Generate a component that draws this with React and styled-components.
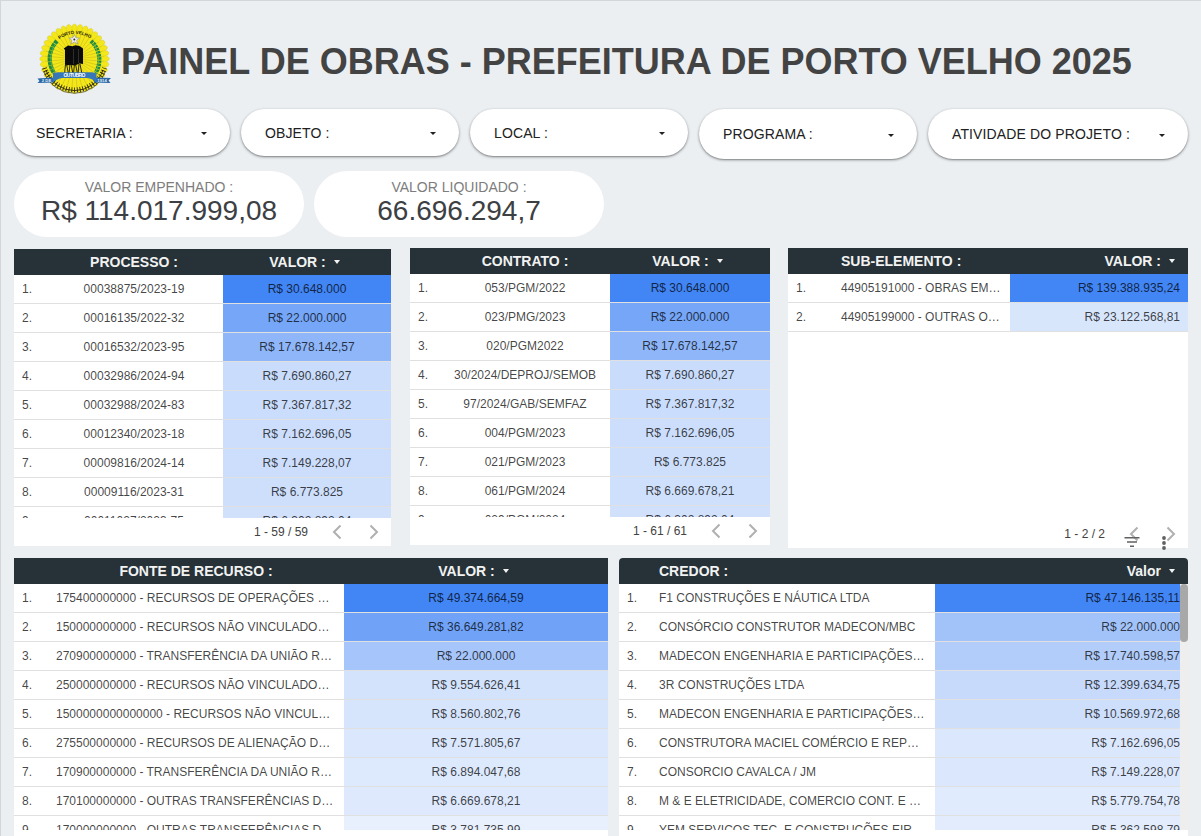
import React from "react";
import styled, { createGlobalStyle } from "styled-components";

const GlobalStyle = createGlobalStyle`
  * { box-sizing: border-box; }
  html, body { margin: 0; padding: 0; overflow: hidden; }
  body { font-family: "Liberation Sans", Arial, sans-serif; background: #ebeff2; }
`;

const Page = styled.div`
  width: 1201px;
  height: 836px;
  overflow: hidden;
  background: #ebeff2;
  border-top: 1px solid #d3d6d8;
  border-left: 1px solid #d3d6d8;
`;

const Header = styled.header`
  display: flex;
  height: 108px;
  padding: 20px 0 0 34px;
`;

const Title = styled.h1`
  margin: 20px 0 0 6px;
  font-size: 36px;
  line-height: 41px;
  font-weight: 700;
  color: #434343;
  white-space: nowrap;
`;

const Filters = styled.div`
  display: flex;
  align-items: flex-start;
  gap: 11px;
  height: 62px;
  padding-left: 11px;
`;

const Filter = styled.button`
  display: flex;
  align-items: center;
  justify-content: space-between;
  width: ${(p) => p.$width}px;
  height: ${(p) => p.$height}px;
  padding: 0 23px 0 24px;
  border: 0;
  border-radius: 25px;
  background: #fff;
  box-shadow: 0 1px 3px rgba(0, 0, 0, 0.4), 0 1px 1px rgba(0, 0, 0, 0.14);
  font: 14px/18px "Liberation Sans", Arial, sans-serif;
  letter-spacing: 0.12px;
  color: #212121;
  white-space: nowrap;
`;

const FilterArrow = styled.span`
  display: flex;
  padding-top: 2px;
`;

const Scorecards = styled.div`
  display: flex;
  gap: 10px;
  height: 77px;
  padding-left: 13px;
`;

const Scorecard = styled.div`
  width: 290px;
  height: 66px;
  padding-top: 8px;
  border-radius: 33px;
  background: #fff;
  text-align: center;
`;

const ScoreLabel = styled.div`
  font-size: 14px;
  line-height: 16px;
  color: #7d7d7d;
`;

const ScoreValue = styled.div`
  font-size: 28px;
  line-height: 32px;
  color: #3c4043;
`;

const TableRow = styled.div`
  display: flex;
  align-items: flex-start;
  padding-left: 13px;
  height: ${(p) => p.$height}px;
`;

const Panel = styled.section`
  position: relative;
  display: flex;
  flex-direction: column;
  flex: none;
  width: ${(p) => p.$width}px;
  height: ${(p) => p.$height}px;
  margin: ${(p) => p.$margin || "0"};
  border-radius: ${(p) => (p.$rounded ? "4px 4px 0 0" : "0")};
  overflow: ${(p) => (p.$rounded ? "hidden" : "visible")};
  background: #fff;
`;

const Columns = styled.div`
  display: grid;
  grid-template-columns: ${(p) => p.$cols};
`;

const HeadRow = styled(Columns)`
  flex: none;
  height: 26px;
  background: #263238;
  color: #f2f2f2;
  font-size: 14px;
  font-weight: 700;
  line-height: 26px;
`;

const HeadCell = styled.div`
  display: flex;
  align-items: center;
  justify-content: ${(p) => p.$align};
  padding: 0 8px;
  white-space: nowrap;
`;

const SortBox = styled.span`
  display: flex;
  justify-content: center;
  width: 16px;
  margin-left: 3px;
`;

const Body = styled.div`
  display: flex;
  flex: none;
  height: ${(p) => p.$height}px;
  overflow: hidden;
`;

const Rows = styled.div`
  flex: 1;
  min-width: 0;
`;

const Row = styled(Columns)`
  height: 29px;
  border-bottom: 1px solid #e0e0e0;
  font-size: 12px;
  line-height: 29px;
  color: rgba(0, 0, 0, 0.74);
`;

const Cell = styled.div`
  height: 28px;
  padding: 0 ${(p) => (p.$flush ? 0 : 8)}px 0 8px;
  text-align: ${(p) => p.$align || "left"};
  white-space: nowrap;
  overflow: hidden;
`;

const HeatCell = styled(Cell)`
  background: ${(p) => p.$fill};
`;

const ScrollTrack = styled.div`
  flex: none;
  width: 8px;
  background: #eeeeee;
`;

const ScrollThumb = styled.div`
  height: 58px;
  border-radius: 4px;
  background: #a8a8a8;
`;

const Footer = styled.footer`
  display: flex;
  align-items: center;
  justify-content: flex-end;
  height: 28px;
  margin-top: auto;
  padding-right: 12px;
  font-size: 12px;
  color: #424242;
`;

const PageRange = styled.span`
  margin-right: 24px;
`;

const Pager = styled.span`
  display: flex;
  gap: 27px;
`;

const ChartTools = styled.div`
  position: absolute;
  right: 16px;
  bottom: -3px;
  display: flex;
  gap: 16px;
`;

const mix = (ratio) => {
  const low = [246, 249, 254];
  const high = [66, 133, 244];
  return `rgb(${low.map((c, i) => Math.round(c + (high[i] - c) * ratio)).join(",")})`;
};

const toNumber = (text) => Number(text.replace(/\./g, "").replace(",", "."));

const Caret = ({ color, height = 4 }) => (
  <svg width="6" height={height} viewBox="0 0 6 4" preserveAspectRatio="none" fill={color}>
    <path d="M0 0H6L3 4Z" />
  </svg>
);

const Chevron = ({ right }) => (
  <svg width="10" height="16" viewBox="0 0 10 16" fill="none" stroke="#b0b0b0" strokeWidth="2">
    <path d={right ? "M1.5 1.5L8 8L1.5 14.5" : "M8.5 1.5L2 8L8.5 14.5"} />
  </svg>
);

const Crest = () => {
  const petals = Array.from({ length: 36 }, (_, i) => i * 10);
  const tanks = [25.5, 30, 34.5, 39];
  return (
    <svg width="80" height="80" viewBox="0 0 80 80">
      {petals.map((a) => (
        <ellipse
          key={a}
          cx="39.5"
          cy="8"
          rx="3"
          ry="5"
          fill="#f3e71a"
          stroke="#cdc13a"
          strokeWidth="0.35"
          transform={`rotate(${a} 39.5 37.8)`}
        />
      ))}
      <circle cx="39.5" cy="37.8" r="30.500" fill="#f3e71a" />
      {petals.map((a) => (
        <path
          key={a}
          d="M39.5 36V8"
          stroke="#b5a81c"
          strokeWidth="0.4"
          transform={`rotate(${a + 5} 39.5 37.8)`}
        />
      ))}
      <path d="M9.500 47A31.500 31.500 0 0 0 69.500 47" fill="none" stroke="#29260c" strokeWidth="5" strokeDasharray="0.9 1.9" />
      <path d="M11 49A30 30 0 0 0 68 49" fill="none" stroke="#29260c" strokeWidth="0.9" />
      <path d="M9 51A32.500 32.500 0 0 0 70 51" fill="none" stroke="#37330c" strokeWidth="0.7" />
      <path d="M22 20C14 28 12 41 19 52" fill="none" stroke="#1f8a40" strokeWidth="4.2" strokeDasharray="3.4 0.4" />
      <path d="M56 20C65 28 67 42 60.500 52" fill="none" stroke="#1f8a40" strokeWidth="4.2" strokeDasharray="2.4 0.7" />
      <path d="M21 22C15 30 14 42 19 50M58 22C64 30 65 42 61 50" fill="none" stroke="#6cbb4a" strokeWidth="0.8" />
      <path id="crest-arc" d="M24 18.500Q39.500 8 55.500 17.500" fill="none" />
      <text fontSize="4.6" fontWeight="700" fill="#242008">
        <textPath href="#crest-arc" startOffset="1%" textLength="33" lengthAdjust="spacing">PORTO VELHO</textPath>
      </text>
      <path d="M39.300 13.500L40.800 16.800L44.400 17.100L41.700 19.400L42.600 23L39.300 21L36 23L36.900 19.400L34.200 17.100L37.800 16.800Z" fill="#eeeef3" stroke="#8c8c95" strokeWidth="0.6" />
      <circle cx="39.300" cy="18.500" r="1" fill="#333" />
      <path d="M28.700 27.500L33 24.500L37.500 25.200L40.500 24.200L44.500 25L48 27.500V43L44.500 42.500L40 44.500L35 44L30 44.500V29Z" fill="#0b0b0b" />
      <path d="M38.500 28V43M43.500 28V42" stroke="#666" strokeWidth="0.4" />
      {tanks.map((x) => (
        <path key={x} d={`M${x + 5} 43L${x + 4} 53M${x + 6} 43L${x + 8} 53`} stroke="#1b1908" strokeWidth="0.9" fill="none" />
      ))}
      <path d="M2.500 57.500L19 56.500V61.500L2.500 62L4.500 60ZM76 57L59 56.500V61.500L75.500 62L73.500 59.500Z" fill="#2867a8" />
      <path d="M18 52L23 51.300H57L61.500 52.500V61.500Q57 57 51 57H28Q23 57 18 61.500Z" fill="#3777b8" />
      <text x="39.500" y="56.300" textAnchor="middle" textLength="22" fontSize="5" fontWeight="700" fill="#fff">OUTUBRO</text>
      <text x="11.500" y="61" textAnchor="middle" textLength="9.500" fontSize="4.200" fontWeight="700" fill="#e3edf6">2 DE</text>
      <text x="67" y="61" textAnchor="middle" textLength="9.500" fontSize="4.200" fontWeight="700" fill="#e3edf6">1914</text>
    </svg>
  );
};

function DataTable({ panel, cols, heads, headAlign, align, rows, bodyHeight, range, scroll, tools }) {
  const top = toNumber(rows[0][1]);
  return (
    <Panel {...panel}>
      <HeadRow $cols={cols}>
        <span />
        <HeadCell $align={headAlign[0]}>{heads[0]}</HeadCell>
        <HeadCell $align={headAlign[1]}>
          {heads[1]}
          <SortBox><Caret color="#f2f2f2" /></SortBox>
        </HeadCell>
      </HeadRow>
      <Body $height={bodyHeight}>
        <Rows>
          {rows.map(([name, value], i) => (
            <Row key={i} $cols={cols}>
              <Cell>{i + 1}.</Cell>
              <Cell $align={align[0]}>{name}</Cell>
              <HeatCell $align={align[1]} $flush={scroll} $fill={mix(toNumber(value) / top)}>
                R$ {value}
              </HeatCell>
            </Row>
          ))}
        </Rows>
        {scroll && <ScrollTrack><ScrollThumb /></ScrollTrack>}
      </Body>
      {range && (
        <Footer>
          <PageRange>{range}</PageRange>
          <Pager><Chevron /><Chevron right /></Pager>
        </Footer>
      )}
      {tools && (
        <ChartTools>
          <svg width="16" height="20" viewBox="0 0 16 20" fill="#616161">
            <path d="M0.500 6H15.500V7.500H0.500ZM3 10.300H13V11.800H3ZM6 14.500H10V16H6Z" />
          </svg>
          <svg width="16" height="20" viewBox="0 0 16 20" fill="#616161">
            <circle cx="8" cy="7" r="1.900" />
            <circle cx="8" cy="12" r="1.900" />
            <circle cx="8" cy="17" r="1.900" />
          </svg>
        </ChartTools>
      )}
    </Panel>
  );
}

const filters = [
  ["SECRETARIA :", 218, 47],
  ["OBJETO :", 218, 47],
  ["LOCAL :", 218, 47],
  ["PROGRAMA :", 218, 50],
  ["ATIVIDADE DO PROJETO :", 260, 50],
];

const processos = [
  ["00038875/2023-19", "30.648.000"],
  ["00016135/2022-32", "22.000.000"],
  ["00016532/2023-95", "17.678.142,57"],
  ["00032986/2024-94", "7.690.860,27"],
  ["00032988/2024-83", "7.367.817,32"],
  ["00012340/2023-18", "7.162.696,05"],
  ["00009816/2024-14", "7.149.228,07"],
  ["00009116/2023-31", "6.773.825"],
  ["00011027/2023-75", "6.302.892,04"],
];

const contratos = [
  ["053/PGM/2022", "30.648.000"],
  ["023/PMG/2023", "22.000.000"],
  ["020/PGM2022", "17.678.142,57"],
  ["30/2024/DEPROJ/SEMOB", "7.690.860,27"],
  ["97/2024/GAB/SEMFAZ", "7.367.817,32"],
  ["004/PGM/2023", "7.162.696,05"],
  ["021/PGM/2023", "6.773.825"],
  ["061/PGM/2024", "6.669.678,21"],
  ["029/PGM/2024", "6.302.892,04"],
];

const subElementos = [
  ["44905191000 - OBRAS EM…", "139.388.935,24"],
  ["44905199000 - OUTRAS O…", "23.122.568,81"],
];

const fontes = [
  ["175400000000 - RECURSOS DE OPERAÇÕES …", "49.374.664,59"],
  ["150000000000 - RECURSOS NÃO VINCULADO…", "36.649.281,82"],
  ["270900000000 - TRANSFERÊNCIA DA UNIÃO R…", "22.000.000"],
  ["250000000000 - RECURSOS NÃO VINCULADO…", "9.554.626,41"],
  ["1500000000000000 - RECURSOS NÃO VINCUL…", "8.560.802,76"],
  ["275500000000 - RECURSOS DE ALIENAÇÃO D…", "7.571.805,67"],
  ["170900000000 - TRANSFERÊNCIA DA UNIÃO R…", "6.894.047,68"],
  ["170100000000 - OUTRAS TRANSFERÊNCIAS D…", "6.669.678,21"],
  ["170000000000 - OUTRAS TRANSFERÊNCIAS D…", "3.781.735,99"],
];

const credores = [
  ["F1 CONSTRUÇÕES E NÁUTICA LTDA", "47.146.135,11"],
  ["CONSÓRCIO CONSTRUTOR MADECON/MBC", "22.000.000"],
  ["MADECON ENGENHARIA E PARTICIPAÇÕES…", "17.740.598,57"],
  ["3R CONSTRUÇÕES LTDA", "12.399.634,75"],
  ["MADECON ENGENHARIA E PARTICIPAÇÕES…", "10.569.972,68"],
  ["CONSTRUTORA MACIEL COMÉRCIO E REP…", "7.162.696,05"],
  ["CONSORCIO CAVALCA / JM", "7.149.228,07"],
  ["M & E ELETRICIDADE, COMERCIO CONT. E …", "5.779.754,78"],
  ["YEM SERVIÇOS TEC. E CONSTRUÇÕES EIR…", "5.362.598,79"],
];

export default function App() {
  return (
    <Page>
      <GlobalStyle />
      <Header>
        <Crest />
        <Title>PAINEL DE OBRAS - PREFEITURA DE PORTO VELHO 2025</Title>
      </Header>
      <Filters>
        {filters.map(([label, width, height]) => (
          <Filter key={label} $width={width} $height={height}>
            {label}
            <FilterArrow><Caret color="#212121" height={3} /></FilterArrow>
          </Filter>
        ))}
      </Filters>
      <Scorecards>
        <Scorecard>
          <ScoreLabel>VALOR EMPENHADO :</ScoreLabel>
          <ScoreValue>R$ 114.017.999,08</ScoreValue>
        </Scorecard>
        <Scorecard>
          <ScoreLabel>VALOR LIQUIDADO :</ScoreLabel>
          <ScoreValue>66.696.294,7</ScoreValue>
        </Scorecard>
      </Scorecards>
      <TableRow $height={310}>
        <DataTable
          panel={{ $width: 377, $height: 297, $margin: "1px 19px 0 0" }}
          cols="31px 1fr 168px"
          heads={["PROCESSO :", "VALOR :"]}
          headAlign={["center", "center"]}
          align={["center", "center"]}
          rows={processos}
          bodyHeight={243}
          range="1 - 59 / 59"
        />
        <DataTable
          panel={{ $width: 360, $height: 297, $margin: "0 18px 0 0" }}
          cols="30px 1fr 160px"
          heads={["CONTRATO :", "VALOR :"]}
          headAlign={["center", "center"]}
          align={["center", "center"]}
          rows={contratos}
          bodyHeight={243}
          range="1 - 61 / 61"
        />
        <DataTable
          panel={{ $width: 400, $height: 300 }}
          cols="45px 1fr 178px"
          heads={["SUB-ELEMENTO :", "VALOR :"]}
          headAlign={["flex-start", "flex-end"]}
          align={["left", "right"]}
          rows={subElementos}
          bodyHeight={246}
          range="1 - 2 / 2"
          tools
        />
      </TableRow>
      <TableRow $height={278}>
        <DataTable
          panel={{ $width: 594, $height: 290, $margin: "0 11px 0 0" }}
          cols="34px 1fr 264px"
          heads={["FONTE DE RECURSO :", "VALOR :"]}
          headAlign={["center", "center"]}
          align={["left", "center"]}
          rows={fontes}
          bodyHeight={246}
        />
        <DataTable
          panel={{ $width: 569, $height: 290, $rounded: true }}
          cols="32px 284px 1fr"
          heads={["CREDOR :", "Valor"]}
          headAlign={["flex-start", "flex-end"]}
          align={["left", "right"]}
          rows={credores}
          bodyHeight={246}
          scroll
        />
      </TableRow>
    </Page>
  );
}
